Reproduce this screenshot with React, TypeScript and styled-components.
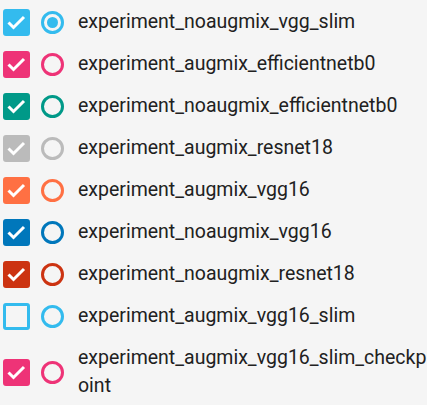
import styled, { createGlobalStyle } from "styled-components";

const GlobalStyle = createGlobalStyle`
  html, body {
    margin: 0;
    padding: 0;
    background: #f5f5f5;
  }
  body {
    font-family: Roboto, "Noto Sans", sans-serif;
  }
`;

const List = styled.div`
  width: 427px;
  padding: 1px 0 0 3px;
  box-sizing: border-box;
  display: flex;
  flex-direction: column;
`;

const Row = styled.div`
  display: flex;
  align-items: center;
  min-height: 42px;
  padding: 7px 0;
  box-sizing: border-box;
`;

const Check = styled.div<{ $color: string; $checked: boolean }>`
  flex: none;
  width: 27px;
  height: 27px;
  border-radius: 3px;
  box-sizing: border-box;
  border: 3px solid ${(p) => p.$color};
  background: ${(p) => (p.$checked ? p.$color : "transparent")};
  display: flex;
  align-items: center;
  justify-content: center;
`;

const Radio = styled.div<{ $color: string; $selected: boolean }>`
  flex: none;
  width: 23px;
  height: 23px;
  margin-left: 11px;
  border-radius: 50%;
  box-sizing: border-box;
  border: 3px solid ${(p) => p.$color};
  display: flex;
  align-items: center;
  justify-content: center;

  &::after {
    content: "";
    display: ${(p) => (p.$selected ? "block" : "none")};
    width: 11px;
    height: 11px;
    border-radius: 50%;
    background: ${(p) => p.$color};
  }
`;

const Label = styled.div`
  margin-left: 14px;
  font-size: 19.5px;
  line-height: 28px;
  color: #212121;
  word-break: break-all;
  min-width: 0;
`;

const runs = [
  { name: "experiment_noaugmix_vgg_slim", color: "#33bbee", checked: true },
  { name: "experiment_augmix_efficientnetb0", color: "#ee3377", checked: true },
  { name: "experiment_noaugmix_efficientnetb0", color: "#009988", checked: true },
  { name: "experiment_augmix_resnet18", color: "#bbbbbb", checked: true },
  { name: "experiment_augmix_vgg16", color: "#ff7043", checked: true },
  { name: "experiment_noaugmix_vgg16", color: "#0077bb", checked: true },
  { name: "experiment_noaugmix_resnet18", color: "#cc3311", checked: true },
  { name: "experiment_augmix_vgg16_slim", color: "#33bbee", checked: false },
  { name: "experiment_augmix_vgg16_slim_checkpoint", color: "#ee3377", checked: true },
];

const CheckMark = () => (
  <svg width="21" height="21" viewBox="0 0 21 21">
    <path
      d="M2.5 10.5 L7.5 15.5 L18 5"
      fill="none"
      stroke="#fff"
      strokeWidth="3"
    />
  </svg>
);

const App = () => (
  <>
    <GlobalStyle />
    <List>
      {runs.map((run, i) => (
        <Row key={run.name}>
          <Check $color={run.color} $checked={run.checked}>
            {run.checked && <CheckMark />}
          </Check>
          <Radio $color={run.color} $selected={i === 0} />
          <Label>{run.name}</Label>
        </Row>
      ))}
    </List>
  </>
);

export default App;
